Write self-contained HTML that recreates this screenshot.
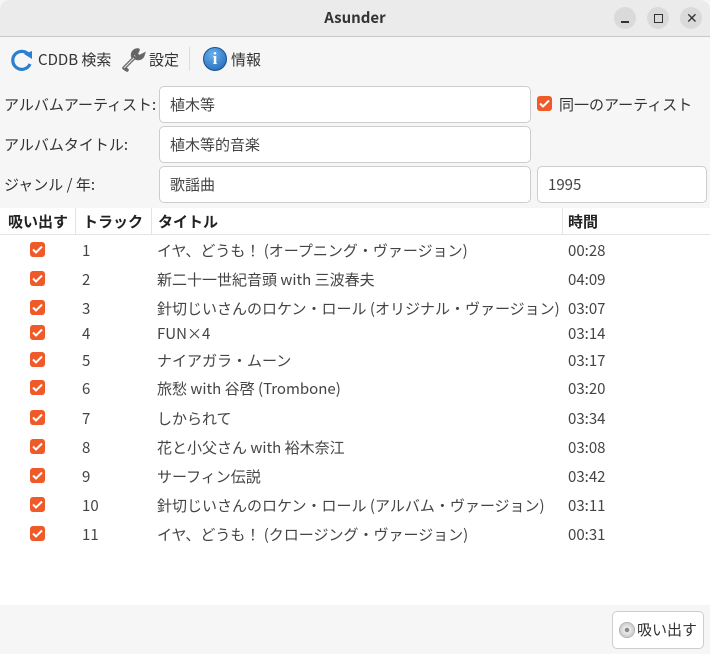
<!DOCTYPE html>
<html><head><meta charset="utf-8"><style>
*{box-sizing:border-box;margin:0;padding:0}
body{width:710px;height:654px;overflow:hidden;background:#f6f6f7;font-family:"Noto Sans CJK JP","Liberation Sans",sans-serif;font-size:15px;line-height:18px;color:#333;position:relative}
.a{position:absolute;white-space:nowrap}
.tb{left:0;top:0;width:710px;height:37px;background:#ebebeb;border-bottom:1px solid #c8c8c8;border-radius:10px 10px 0 0}
.wb{width:22px;height:22px;border-radius:50%;background:#dadada;top:7px}
.in{background:#fff;border:1px solid #cdcdcd;border-radius:5px;height:37px;padding:9px 10px;color:#444}
.cb{width:15px;height:15px;border-radius:3px;background:#f05a28}
.cb svg{position:absolute;left:2px;top:3px}
.hd{font-weight:bold;color:#222;top:213px}
.row{color:#444}
</style></head><body>
<div class="a tb"></div>
<div class="a" style="left:0;width:710px;top:9px;text-align:center;font-weight:bold;font-size:15px;color:#333">Asunder</div>
<div class="a wb" style="left:614px"></div><div class="a" style="left:621px;top:21px;width:8px;height:1.5px;background:#333"></div>
<div class="a wb" style="left:647px"></div><div class="a" style="left:654px;top:14px;width:9px;height:9px;border:1.5px solid #333"></div>
<div class="a wb" style="left:680px"></div><div class="a" style="left:686px;top:9px;font-size:14px;color:#333">✕</div>

<svg class="a" style="left:10px;top:48px" width="24" height="24" viewBox="0 0 24 24"><path d="M19 7A9 9 0 1 0 20 16" fill="none" stroke="#2b7fd0" stroke-width="3.2"/><path d="M14 6l8 -3v8z" fill="#2b7fd0"/></svg>
<div class="a" style="left:38px;top:51px">CDDB 検索</div>
<svg class="a" style="left:120px;top:47px" width="26" height="26" viewBox="0 0 26 26"><path d="M4 21l10-10M18 3a5 5 0 0 0-5 7M18 3l-2 4 3 3 4-2a5 5 0 0 1-7 3M4 21l3 2" fill="none" stroke="#666" stroke-width="3.5" stroke-linecap="round"/><path d="M4 21l10-10" stroke="#ddd" stroke-width="1.2"/></svg>
<div class="a" style="left:149px;top:51px">設定</div>
<div class="a" style="left:189px;top:47px;width:1px;height:24px;background:#ddd"></div>
<div class="a" style="left:203px;top:47px;width:24px;height:24px;border-radius:50%;background:radial-gradient(circle at 40% 30%,#6ab0ee,#1b62b3);border:1px solid #184f90;color:#fff;font-family:'Liberation Serif',serif;font-weight:bold;text-align:center;font-size:17px;line-height:22px">i</div>
<div class="a" style="left:231px;top:51px">情報</div>

<div class="a" style="left:4px;top:96px">アルバムアーティスト:</div>
<div class="a in" style="left:159px;top:86px;width:372px">植木等</div>
<div class="a cb" style="left:537px;top:96px"><svg width="11" height="9"><path d="M1 4.5l3 3 6-6" fill="none" stroke="#fff" stroke-width="2"/></svg></div>
<div class="a" style="left:559px;top:96px">同一のアーティスト</div>
<div class="a" style="left:4px;top:136px">アルバムタイトル:</div>
<div class="a in" style="left:159px;top:126px;width:372px">植木等的音楽</div>
<div class="a" style="left:4px;top:176px">ジャンル / 年:</div>
<div class="a in" style="left:159px;top:166px;width:372px">歌謡曲</div>
<div class="a in" style="left:537px;top:166px;width:170px">1995</div>

<div class="a" style="left:0;top:208px;width:710px;height:397px;background:#fff"></div>
<div class="a" style="left:0;top:234px;width:710px;height:1px;background:#e4e4e4"></div>
<div class="a" style="left:75px;top:208px;width:1px;height:26px;background:#e4e4e4"></div>
<div class="a" style="left:151px;top:208px;width:1px;height:26px;background:#e4e4e4"></div>
<div class="a" style="left:562px;top:208px;width:1px;height:26px;background:#e4e4e4"></div>
<div class="a hd" style="left:8px">吸い出す</div>
<div class="a hd" style="left:83px">トラック</div>
<div class="a hd" style="left:158px">タイトル</div>
<div class="a hd" style="left:568px">時間</div>

<div id="rows"></div>
<script>
var d=[[250,"イヤ、どうも！ (オープニング・ヴァージョン)","00:28"],[279,"新二十一世紀音頭 with 三波春夫","04:09"],[308,"針切じいさんのロケン・ロール (オリジナル・ヴァージョン)","03:07"],[333,"FUN×4","03:14"],[360,"ナイアガラ・ムーン","03:17"],[388,"旅愁 with 谷啓 (Trombone)","03:20"],[418,"しかられて","03:34"],[447,"花と小父さん with 裕木奈江","03:08"],[476,"サーフィン伝説","03:42"],[505,"針切じいさんのロケン・ロール (アルバム・ヴァージョン)","03:11"],[534,"イヤ、どうも！ (クロージング・ヴァージョン)","00:31"]];
var h="";d.forEach(function(r,i){var y=r[0];
h+='<div class="a cb" style="left:30px;top:'+(y-8)+'px"><svg width="11" height="9"><path d="M1 4.5l3 3 6-6" fill="none" stroke="#fff" stroke-width="2"/></svg></div>';
h+='<div class="a row" style="left:82px;top:'+(y-8)+'px">'+(i+1)+'</div>';
h+='<div class="a row" style="left:157px;top:'+(y-8)+'px">'+r[1]+'</div>';
h+='<div class="a row" style="left:568px;top:'+(y-8)+'px">'+r[2]+'</div>';});
document.getElementById("rows").innerHTML=h;
</script>

<div class="a" style="left:612px;top:611px;width:92px;height:38px;background:#fff;border:1px solid #cdcdcd;border-radius:5px"></div>
<div class="a" style="left:619px;top:622px;width:16px;height:16px;border-radius:50%;background:radial-gradient(circle,#888 0 2px,#eee 2.5px,#ccc 7px,#999 8px)"></div>
<div class="a" style="left:637px;top:621px;font-size:15px">吸い出す</div>
</body></html>
